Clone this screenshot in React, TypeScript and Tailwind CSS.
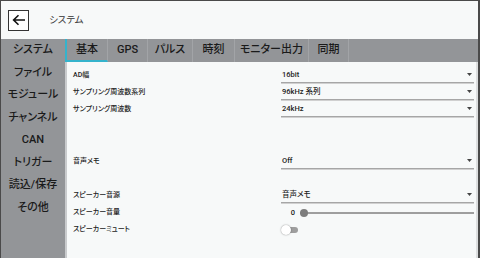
import React from "react";

const jp = "font-['Roboto','Noto_Sans_CJK_JP',sans-serif] [font-feature-settings:'palt']";

const sideItems = ["システム", "ファイル", "モジュール", "チャンネル", "CAN", "トリガー", "読込/保存", "その他"];
const tabs: { label: string; w: string }[] = [
  { label: "基本", w: "w-[43px]" },
  { label: "GPS", w: "w-[40px]" },
  { label: "パルス", w: "w-[45px]" },
  { label: "時刻", w: "w-[42px]" },
  { label: "モニター出力", w: "w-[74px]" },
  { label: "同期", w: "w-[40px]" },
];

function Select({ value }: { value: string }) {
  return (
    <div className="h-[17px] flex flex-col justify-end">
      <div className="flex items-center justify-between pl-[1px] pr-[2px] h-[15px]">
        <span className="text-[7.5px] font-medium text-[#222]">{value}</span>
        <svg width="5" height="3" viewBox="0 0 5 3"><path d="M0 0H5L2.5 3Z" fill="#444" /></svg>
      </div>
      <div className="h-[2px] bg-[#a6a6a6] border-b border-[#d0d0d0]" />
    </div>
  );
}

function Label({ text }: { text: string }) {
  return (
    <div className="h-[17px] flex items-center text-[7px] font-medium text-[#222]">{text}</div>
  );
}

export default function App() {
  return (
    <div className={`w-[480px] h-[258px] border-l border-t border-r-2 border-[#4a4a4a] flex flex-col bg-[#f7f9f9] overflow-hidden ${jp}`}>
      <div className="h-[38px] flex items-center pl-[7px] shrink-0">
        <div className="w-[21px] h-[21px] border border-[#333] bg-white flex items-center justify-center">
          <svg width="14" height="12" viewBox="0 0 14 12" fill="none" stroke="#111" strokeWidth="1.6">
            <path d="M13 6H2M6.5 1.2L1.6 6l4.9 4.8" />
          </svg>
        </div>
        <span className="ml-[20px] text-[9.5px] text-[#333]">システム</span>
      </div>
      <div className="flex flex-1 min-h-0">
        <div className="w-[64px] bg-[#939598] flex flex-col shrink-0">
          {sideItems.map((s) => (
            <div key={s} className="h-[22.5px] flex items-center justify-center text-[11px] font-medium text-[#1a1a1a]">
              {s}
            </div>
          ))}
        </div>
        <div className="flex-1 flex flex-col border-l-2 border-[#c9cbcd]">
          <div className="h-[23px] bg-[#939598] flex shrink-0">
            {tabs.map((t, i) => (
              <div
                key={t.label}
                className={`${t.w} h-full flex items-center justify-center text-[11px] font-medium text-[#1a1a1a] border-r border-[#a2a4a7] ${i === 0 ? "border-b-2 border-b-[#35b3cc] -ml-[2px] border-l-2 border-l-[#35b3cc] pt-[1px]" : ""}`}
              >
                {t.label}
              </div>
            ))}
          </div>
          <div className="flex-1 bg-[#f7f9f9] border-r-2 border-[#dcdedf] pl-[6px] pt-[5px]">
            <div className="grid grid-cols-[208px_193px]">
              <Label text="AD幅" />
              <Select value="16bit" />
              <Label text="サンプリング周波数系列" />
              <Select value="96kHz 系列" />
              <Label text="サンプリング周波数" />
              <Select value="24kHz" />
            </div>
            <div className="grid grid-cols-[208px_193px] mt-[35px]">
              <Label text="音声メモ" />
              <Select value="Off" />
            </div>
            <div className="grid grid-cols-[208px_193px] mt-[17px]">
              <Label text="スピーカー音源" />
              <Select value="音声メモ" />
              <Label text="スピーカー音量" />
              <div className="h-[17px] flex items-center">
                <span className="w-[14px] text-right text-[7.5px] font-medium text-[#222]">0</span>
                <div className="ml-[5px] flex-1 relative h-[2px] bg-[#9e9e9e]">
                  <div className="absolute left-0 top-1/2 -translate-y-1/2 w-[8px] h-[8px] rounded-full bg-[#7d7d7d]" />
                </div>
              </div>
              <Label text="スピーカーミュート" />
              <div className="h-[17px] flex items-center">
                <div className="relative w-[18px] h-[10px] flex items-center">
                  <div className="ml-[2px] w-[15px] h-[6px] rounded-full bg-[#9e9e9e]" />
                  <div className="absolute left-0 top-0 w-[10px] h-[10px] rounded-full bg-white shadow-[0_0_1.5px_rgba(0,0,0,0.5)]" />
                </div>
              </div>
            </div>
          </div>
        </div>
      </div>
    </div>
  );
}
